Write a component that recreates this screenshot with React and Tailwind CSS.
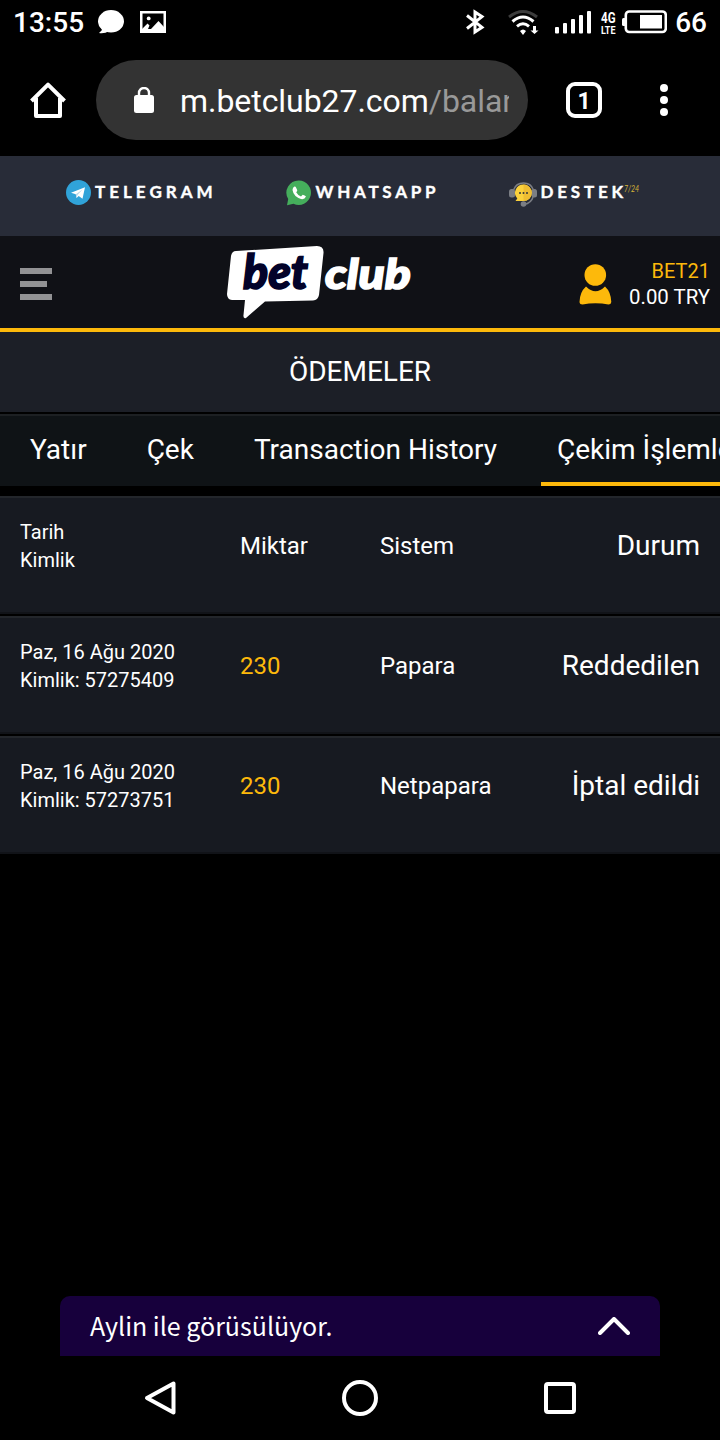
import React from "react";

const tabs = [
  { label: "Yatır" },
  { label: "Çek" },
  { label: "Transaction History" },
  { label: "Çekim İşlemleri", active: true },
];

const rows = [
  { date: "Paz, 16 Ağu 2020", id: "Kimlik: 57275409", amount: "230", system: "Papara", status: "Reddedilen" },
  { date: "Paz, 16 Ağu 2020", id: "Kimlik: 57273751", amount: "230", system: "Netpapara", status: "İptal edildi" },
];

const StatusBar = () => (
  <div className="h-11 flex items-center pl-[13px] pr-[13px] text-[28px] leading-none font-medium">
    <span className="w-[85px] pt-0.5">13:55</span>
    <svg width="26" height="24" viewBox="0 0 26 24" fill="#fff">
      <ellipse cx="13" cy="11.3" rx="13" ry="11.2" />
      <path d="M2 15 L4 20 L1 23 Q7 23.8 11 21 Z" />
    </svg>
    <svg className="ml-4" width="26" height="22" viewBox="0 0 26 22" fill="none">
      <path d="M1.25 1.25H24.75V20.75H1.25Z" stroke="#fff" strokeWidth="2.5" />
      <circle cx="8.7" cy="7.4" r="1.9" fill="#fff" />
      <path d="M2 18 L7.5 12.5 L9.5 14.5 L8 18 L11 18 L18.5 10 L24 16 V21 H2Z" fill="#fff" />
    </svg>
    <div className="ml-auto flex items-center">
      <svg width="20" height="26" viewBox="0 0 20 26" fill="none" stroke="#fff" strokeWidth="3">
        <path d="M2 6.5 L17 18.3 L10 23 V3 L17 7.7 L2 19.5" />
      </svg>
      <svg className="ml-[23px]" width="31" height="27" viewBox="0 0 31 27" fill="none" strokeWidth="3">
        <path d="M1 8 Q15 -3 29 8" stroke="#3c3c3c" />
        <path d="M4.5 12.5 Q15 3.5 25.5 12.5" stroke="#fff" />
        <path d="M9 17.3 Q15 12.3 21 17.3" stroke="#fff" />
        <path d="M12 22 Q15 18.8 18 22 L15 26Z" fill="#fff" />
        <path d="M25 17 H28 V21.5 H30.5 L26.5 25 L22.5 21.5 H25Z" fill="#fff" />
      </svg>
      <svg className="ml-4" width="36" height="24" viewBox="0 0 36 24" fill="#fff">
        <rect x="0" y="17" width="4" height="6.5" rx="1" />
        <rect x="8" y="13" width="4" height="10.5" rx="1" />
        <rect x="16" y="9" width="4" height="14.5" rx="1" />
        <rect x="24" y="5" width="4" height="18.5" rx="1" />
        <rect x="32" y="1" width="4" height="22.5" rx="1" />
      </svg>
      <svg className="ml-[9px] overflow-visible" width="16" height="26" viewBox="0 0 16 26" fill="#fff" fontWeight="700">
        <text x="1" y="13.5" fontSize="14.5" textLength="14.5" lengthAdjust="spacingAndGlyphs">4G</text>
        <text x="1" y="25" fontSize="11" textLength="14.5" lengthAdjust="spacingAndGlyphs">LTE</text>
      </svg>
      <svg className="ml-1.5" width="45" height="24" viewBox="0 0 45 24" fill="none">
        <rect x="0" y="8" width="4" height="8" rx="1.5" fill="#fff" />
        <rect x="3.8" y="1.5" width="40" height="20.5" rx="3.5" stroke="#fff" strokeWidth="2.6" />
        <rect x="18" y="5" width="22" height="13.5" fill="#fff" />
      </svg>
      <span className="ml-2 pt-0.5">66</span>
    </div>
  </div>
);

const AddressBar = () => (
  <div className="h-28 flex items-center px-[30px]">
    <svg width="36" height="36" viewBox="0 0 36 36" fill="none" stroke="#fff" strokeWidth="4">
      <path d="M1.5 19 L18 2.7 L34.5 19" strokeLinejoin="round" />
      <path d="M6 16 V34 H30 V16" strokeLinejoin="round" />
    </svg>
    <div className="ml-[30px] w-[432px] h-20 rounded-full bg-[#333333] flex items-center pl-[38px] pr-[19px]">
      <svg className="shrink-0" width="20" height="26" viewBox="0 0 20 26">
        <rect y="8" width="20" height="18" rx="2.5" fill="#fff" />
        <path d="M5 9 V6 A5 5 0 0 1 15 6 V9" fill="none" stroke="#fff" strokeWidth="2.4" />
      </svg>
      <div className="ml-[26px] flex-1 overflow-hidden whitespace-nowrap text-[32px] leading-10 pt-0.5 tracking-[-0.05px]">
        m.betclub27.com<span className="text-[#999999]">/balance</span>
      </div>
    </div>
    <div className="ml-[38px] size-9 rounded-[9px] border-4 border-white flex items-center justify-center text-[23px] font-bold leading-none pt-0.5">
      1
    </div>
    <div className="ml-[58px] flex flex-col gap-1">
      <span className="size-2 rounded-full bg-white" />
      <span className="size-2 rounded-full bg-white" />
      <span className="size-2 rounded-full bg-white" />
    </div>
  </div>
);

const ContactBar = () => (
  <div className="h-20 bg-[#282c38] flex items-start pt-6 pl-[66px] font-['Lato',sans-serif] font-bold text-[17px] leading-6 whitespace-nowrap">
    <div className="w-[220px] flex">
      <svg width="25" height="25" viewBox="0 0 25 25">
        <circle cx="12.5" cy="12.5" r="12.5" fill="#30a3d9" />
        <path d="M5 12.8 L19 7.2 L16.5 18.8 L12.7 16 L10.5 18 L9.8 14.3Z" fill="#fff" />
        <path d="M9.8 14.3 L16.5 9.5 L11.5 15 L10.5 18Z" fill="#b9d9ea" />
      </svg>
      <svg className="ml-1 overflow-visible" width="122" height="24" fill="#fff" stroke="#fff" strokeWidth="0.4">
        <text x="0" y="18" letterSpacing="3.4" textLength="121">TELEGRAM</text>
      </svg>
    </div>
    <div className="w-[223px] flex">
      <svg width="26" height="26" viewBox="0 0 26 26">
        <path d="M13 .5 A12.2 12.2 0 1 1 7.5 23.7 L1 25.2 L2.2 19 A12.2 12.2 0 0 1 13 .5Z" fill="#45ae5c" />
        <path d="M7 8 Q9 5.5 10 7.5 L11.3 10.2 Q11 11.5 10.2 12.2 Q12 15.5 15 16.4 L16.7 14.8 Q19 15.3 20 16.6 Q18.5 19.8 15 19 Q7.5 16.5 6.5 10Z" fill="#fff" />
      </svg>
      <svg className="ml-[3px] overflow-visible" width="124" height="24" fill="#fff" stroke="#fff" strokeWidth="0.4">
        <text x="0.5" y="18" letterSpacing="3.4" textLength="123.5">WHATSAPP</text>
      </svg>
    </div>
    <div className="flex">
      <svg className="mt-0.5" width="28" height="26" viewBox="0 0 28 26" fill="none">
        <path d="M4.5 8 Q7 1 14.5 1 Q22 1 24.5 8 M24 15 Q22.5 21 15 22.5" stroke="#7b7e84" strokeWidth="1.5" />
        <rect x="0" y="7" width="6" height="8.5" rx="2.5" fill="#7b7e84" />
        <rect x="22.5" y="7" width="5.5" height="8.5" rx="2.5" fill="#7b7e84" />
        <circle cx="14.5" cy="22" r="2.8" fill="#7b7e84" />
        <path d="M14.5 2.5 A8.3 8.3 0 1 1 14.5 19.1 H6.5 L8.3 16.5 A8.3 8.3 0 0 1 14.5 2.5Z" fill="#fbd13c" />
        <path d="M14.5 2.5 A8.3 8.3 0 0 1 14.5 19.1Z" fill="#efbd32" />
        <g fill="#33343a">
          <circle cx="11" cy="11" r="1" />
          <circle cx="14.5" cy="11" r="1" />
          <circle cx="18" cy="11" r="1" />
        </g>
      </svg>
      <svg className="ml-[3px] overflow-visible" width="102" height="24">
        <text x="0.5" y="18" letterSpacing="3.4" textLength="86" fill="#fff" stroke="#fff" strokeWidth="0.4">DESTEK</text>
        <text x="84" y="12" fontSize="9" fontWeight="400" fontStyle="italic" textLength="15" lengthAdjust="spacingAndGlyphs" fill="#d5b437">7/24</text>
      </svg>
    </div>
  </div>
);

const Logo = () => (
  <svg width="188" height="76" viewBox="0 0 188 76" className="overflow-visible font-['Lato',sans-serif] font-black italic">
    <path d="M10 7 L91 2 Q98 2 97.5 9 L93 51 Q92 56 87 56.5 L39 57.5 L20 74 Q17 75 17.5 71 L19 56 L6 56 Q1 55.5 1 50 L5 12 Q6 7 10 7Z" fill="#fff" />
    <text x="17" y="44.5" fontSize="48" textLength="65" lengthAdjust="spacingAndGlyphs" fill="#03032a" stroke="#03032a" strokeWidth="1.6">bet</text>
    <text x="99" y="44.5" fontSize="42" textLength="86" lengthAdjust="spacingAndGlyphs" fill="#fff" stroke="#fff" strokeWidth="1.6">club</text>
  </svg>
);

const Header = () => (
  <div className="h-24 bg-[#101116] border-b-4 border-[#fdb90b] flex items-center">
    <div className="ml-5 mt-1 w-8 flex flex-col gap-[7px]">
      <span className="h-1.5 bg-[#929294]" />
      <span className="h-1.5 w-[27px] bg-[#929294]" />
      <span className="h-1.5 bg-[#929294]" />
    </div>
    <div className="ml-[174px]">
      <Logo />
    </div>
    <div className="ml-auto mr-[10px] pt-1 flex items-center">
      <svg className="mr-[17px]" width="33" height="41" viewBox="0 0 33 41" fill="#fdb90b">
        <ellipse cx="16.3" cy="11" rx="10.8" ry="10.8" />
        <path d="M7 22.5 Q16.5 32 26 22.5 Q32 28 32.3 38 Q32 40.5 29.5 40.5 Q16.5 38 3.5 40.5 Q.7 40.5 .5 38 Q.8 28 7 22.5Z" />
      </svg>
      <div className="text-right text-[20px] leading-[26px]">
        <div className="text-[#fdb90b]">BET21</div>
        <div className="text-[20.4px]">0.00 TRY</div>
      </div>
    </div>
  </div>
);

const Tabs = () => (
  <div className="h-[74px] border-t-2 border-black overflow-hidden">
    <div className="h-[72px] border-t-2 border-[#1d2023] bg-[#0f1316] flex gap-7 pl-[14px] text-[28px] leading-[68px] whitespace-nowrap">
      {tabs.map((tab) => (
        <div
          key={tab.label}
          className={`px-4 shrink-0 h-[70px] border-b-4 ${tab.active ? "border-[#fdb90b]" : "border-transparent"}`}
        >
          {tab.label}
        </div>
      ))}
    </div>
  </div>
);

const Row = ({ date, id, amount, system, status, head }) => (
  <div className="h-[118px] border-t-2 border-t-[#23262b] border-b-2 border-b-[#111318] bg-[#171a21] flex items-center px-5 pb-[18px] text-[24px]">
    <div className="w-[220px] text-[20px] leading-7">
      <div>{date}</div>
      <div>{id}</div>
    </div>
    <div className={`w-[140px] ${head ? "" : "text-[#fdb90b]"}`}>{amount}</div>
    <div>{system}</div>
    <div className="ml-auto text-[28px]">{status}</div>
  </div>
);

const ChatBar = () => (
  <div className="mx-[60px] h-[60px] rounded-t-[10px] bg-[#17003c] flex items-center justify-between px-[30px]">
    <span className="font-['Noto_Sans_CJK_SC',sans-serif] text-[25px] leading-[58px] pb-0.5">
      Aylin ile görüsülüyor.
    </span>
    <svg width="32" height="18" viewBox="0 0 32 18" fill="none" stroke="#fff" strokeWidth="4" strokeLinecap="round" strokeLinejoin="round">
      <path d="M2 16 L16 2 L30 16" />
    </svg>
  </div>
);

const NavBar = () => (
  <div className="h-[84px] flex items-center justify-between pl-36 pr-36">
    <svg width="32" height="36" viewBox="0 0 32 36" fill="none" stroke="#fff" strokeWidth="4" strokeLinejoin="round">
      <path d="M29.5 3.5 V32.5 L3 18Z" />
    </svg>
    <div className="size-9 rounded-full border-4 border-white" />
    <div className="size-8 rounded-[4px] border-4 border-white" />
  </div>
);

const App = () => {
  return (
    <div className="w-[720px] h-[1440px] bg-black text-white font-['Roboto',sans-serif] flex flex-col overflow-hidden">
      <StatusBar />
      <AddressBar />
      <ContactBar />
      <Header />
      <div className="h-20 bg-[#1c1f27] text-center text-[28px] leading-[80px]">ÖDEMELER</div>
      <Tabs />
      <div className="mt-[10px] flex flex-col gap-0.5">
        <Row head date="Tarih" id="Kimlik" amount="Miktar" system="Sistem" status="Durum" />
        {rows.map((row) => (
          <Row key={row.id} {...row} />
        ))}
      </div>
      <div className="mt-auto">
        <ChatBar />
        <NavBar />
      </div>
    </div>
  );
};

export default App;
